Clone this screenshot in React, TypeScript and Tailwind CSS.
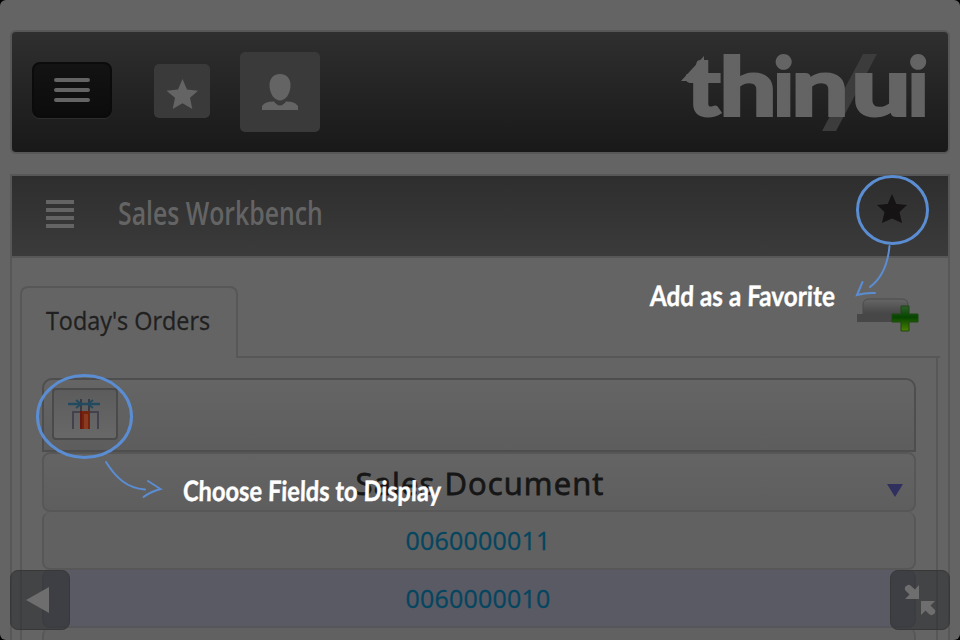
import type { ReactNode } from "react";

function MainBar() {
  return (
    <header className="flex h-[124px] shrink-0 rounded-md border-2 border-[#575757] bg-linear-to-b from-[#2f2f2f] to-[#191919] pl-5 pr-[18px]">
      <button className="mt-[30px] flex h-14 w-20 flex-col items-center justify-center gap-[6px] rounded-lg border-2 border-[#0b0b0b] bg-linear-to-b from-[#131313] to-[#0c0c0c] shadow-[0_1px_1px_#303030]">
        <span className="h-1 w-9 rounded-full bg-[#646464]" />
        <span className="h-1 w-9 rounded-full bg-[#646464]" />
        <span className="h-1 w-9 rounded-full bg-[#646464]" />
      </button>
      <button className="ml-[42px] mt-8 h-[54px] w-14 rounded-[5px] bg-[#3a3a3a]">
        <svg viewBox="0 0 56 54" className="h-[54px] w-14">
          <path d="M28.5 15 L33 25.5 L44 26.7 L36 33.8 L38.3 45 L28.5 39.3 L18.7 45 L21 33.8 L12.5 26.7 L24 25.5Z" fill="#646464" />
        </svg>
      </button>
      <button className="ml-[30px] mt-5 size-20 rounded-[5px] bg-[#3a3a3a]">
        <svg viewBox="0 0 80 80" className="size-20">
          <path d="M40 22 C46.5 22 50.5 26.5 50.5 33 C50.5 42 45.5 48.5 40 48.5 C34.5 48.5 29.5 42 29.5 33 C29.5 26.5 33.5 22 40 22Z" fill="#646464" />
          <path d="M22 58 V54 C25 50 30 49.5 34 49.5 Q37 53.5 40 53.5 Q43 53.5 46 49.5 C50 49.5 55 50 58 54 V58Z" fill="#646464" />
        </svg>
      </button>
      <svg viewBox="680 40 250 100" className="ml-auto mt-2 h-[100px] w-[250px]" fill="#646464">
        <path d="M863 54 H877 L836 131 H822Z" fill="#3c3c3c" />
        <path d="M681 81 L704 56 V81Z" />
        <g fontFamily="Lato, sans-serif" fontWeight="900" fontSize="82" stroke="#646464" strokeWidth="2">
          <text x="686" y="115.500" textLength="35" lengthAdjust="spacingAndGlyphs">t</text>
          <text x="719" y="115.500" textLength="58" lengthAdjust="spacingAndGlyphs">h</text>
          <text x="773" y="115.500">i</text>
          <text x="791" y="115.500" textLength="58" lengthAdjust="spacingAndGlyphs">n</text>
          <text x="851" y="115.500" textLength="60" lengthAdjust="spacingAndGlyphs">u</text>
          <text x="907.500" y="115.500">i</text>
        </g>
      </svg>
    </header>
  );
}

function TitleBar() {
  return (
    <div className="flex h-[82px] shrink-0 items-start border-b-2 border-[#575757] bg-linear-to-b from-[#2e2e2e] to-[#3b3b3b] pl-[34px]">
      <div className="mt-6 flex w-7 flex-col gap-1">
        <span className="h-1 bg-[#646464]" />
        <span className="h-1 bg-[#646464]" />
        <span className="h-1 bg-[#646464]" />
        <span className="h-1 bg-[#646464]" />
      </div>
      <h1 className="ml-[44px] mt-[17px] origin-left scale-x-[0.775] whitespace-nowrap font-['Open_Sans',sans-serif] text-[32px] leading-10 font-semibold text-[#646464]">
        Sales Workbench
      </h1>
      <svg viewBox="0 0 32 32" className="ml-auto mr-[40px] mt-[17px] size-8">
        <path d="M16 1 L20.3 11 L31 12 L23.5 19 L26 30 L16 25.5 L6 30 L8.5 19 L1 12 L11.7 11Z" fill="#151313" />
      </svg>
    </div>
  );
}

function TabStrip() {
  return (
    <div className="flex h-[72px]">
      <div className="h-[72px] w-[218px] rounded-t-lg border-2 border-b-0 border-[#575757] pl-6 pt-[14px]">
        <span className="inline-block origin-left scale-x-[0.935] whitespace-nowrap font-['Open_Sans',sans-serif] text-[25px] leading-9 text-[#202020] [-webkit-text-stroke:0.3px]">
          Today's Orders
        </span>
      </div>
      <div className="flex flex-1 justify-end border-b-2 border-[#575757] pr-5 pt-2">
        <svg viewBox="0 0 64 40" className="h-10 w-16">
          <defs>
            <linearGradient id="tray" x1="0" y1="0" x2="0" y2="1">
              <stop offset="0" stopColor="#666" />
              <stop offset="1" stopColor="#454545" />
            </linearGradient>
            <linearGradient id="plus" x1="0" y1="0" x2="0" y2="1">
              <stop offset="0" stopColor="#2f5e2c" />
              <stop offset="0.45" stopColor="#064500" />
              <stop offset="1" stopColor="#4c8200" />
            </linearGradient>
          </defs>
          <path d="M7 20 V11 Q7 5 13 5 H46 Q52 5 52 11 V20Z" fill="url(#tray)" stroke="#4b4b4b" />
          <path d="M1 20 H52 V28 H1Z" fill="#474747" />
          <path d="M45 12 H53 V20 H62 V28 H53 V37 H45 V28 H36 V20 H45Z" fill="url(#plus)" stroke="#1c4912" />
        </svg>
      </div>
    </div>
  );
}

function Toolbar() {
  return (
    <div className="h-[74px] rounded-t-[10px] border-2 border-[#4e4e4e] bg-linear-to-b from-[#656565] to-[#5d5d5d] pl-2 pt-2">
      <button className="flex h-[52px] w-[66px] items-center justify-center rounded-[4px] border-2 border-[#4a4a4a] bg-linear-to-b from-[#5c5c5c] to-[#686868]">
        <svg viewBox="68 398 34 34" className="h-[34px] w-[34px]" fill="none">
          <path d="M73 430 V413 H98 V430" stroke="#42414d" strokeWidth="2" />
          <path d="M81 400 V430 M89 400 V430" stroke="#383b44" strokeWidth="2" />
          <path d="M80 412 H90 V430 H80Z" fill="#73240f" />
          <path d="M81 412 V430" stroke="#681813" strokeWidth="2" />
          <path d="M84 415 H88 V430 H84Z" fill="#8a3a1e" />
          <path d="M68 405 H100" stroke="#234b60" strokeWidth="2.500" />
          <path d="M76 401 L81 405 L76 409 M93 401 L88 405 L93 409" stroke="#234b60" strokeWidth="2" />
        </svg>
      </button>
    </div>
  );
}

function Row({ children, shaded = false }: { children: ReactNode; shaded?: boolean }) {
  return (
    <div
      className={`h-[58px] rounded-lg border-x-2 border-b-2 pr-[2px] text-center font-['Open_Sans',sans-serif] text-[25px] leading-[57px] tracking-[0.2px] text-[#04455f] [-webkit-text-stroke:0.3px] ${shaded ? "border-[#55555b] bg-[#5a5a65]" : "border-[#575757] bg-[#616161]"}`}
    >
      {children}
    </div>
  );
}

function Orders() {
  return (
    <section className="flex-1 pl-2 pr-2">
      <TabStrip />
      <div className="mr-[2px] h-[300px] border-x-2 border-[#575757] px-5 pt-5">
        <Toolbar />
        <div className="flex h-[60px] rounded-lg border-2 border-[#575757] bg-linear-to-b from-[#646464] to-[#5e5e5e]">
          <span className="w-[30px]" />
          <h2 className="flex-1 text-center font-['Open_Sans',sans-serif] text-[31px] leading-[58px] font-normal tracking-[1.1px] text-[#161616] [-webkit-text-stroke:0.8px]">
            Sales Document
          </h2>
          <svg viewBox="0 0 18 16" className="mr-[10px] mt-[29px] h-4 w-[18px]">
            <path d="M1 1 H17 L9 14Z" fill="#30305f" />
          </svg>
        </div>
        <Row>0060000011</Row>
        <Row shaded>0060000010</Row>
        <Row>{""}</Row>
      </div>
    </section>
  );
}

function Annotations() {
  return (
    <div className="absolute inset-0">
      <svg viewBox="0 0 960 640" className="absolute inset-0 h-[640px] w-[960px]" fill="none" stroke="#5b8dd3" strokeLinecap="round">
        <ellipse cx="892.5" cy="210" rx="35" ry="33.5" strokeWidth="3" />
        <ellipse cx="84.5" cy="416.5" rx="47" ry="41" strokeWidth="3" />
        <path d="M889.500 246 C888 263 882 278 870 287" strokeWidth="2" />
        <path d="M862.500 282 L857 295 Q866 292.500 875 293" strokeWidth="2" />
        <path d="M106 462 C116 478 127 488 145 489.500" strokeWidth="2" />
        <path d="M148 481 L160.500 489 Q151 491.500 143.500 497" strokeWidth="2" />
      </svg>
      <p className="absolute left-[650px] top-[275px] origin-left -skew-x-2 scale-x-[0.868] whitespace-nowrap font-[Lato,sans-serif] text-[28px] leading-10 font-bold text-white [-webkit-text-stroke:0.4px]">
        Add as a Favorite
      </p>
      <p className="absolute left-[183px] top-[470px] origin-left -skew-x-2 scale-x-[0.845] whitespace-nowrap font-[Lato,sans-serif] text-[28px] leading-10 font-bold text-white [-webkit-text-stroke:0.4px]">
        Choose Fields to Display
      </p>
      <button className="absolute left-[10px] top-[570px] size-[60px] rounded-lg border border-[#383838] bg-[#28292b]/55">
        <svg viewBox="0 0 60 60" className="-ml-px -mt-px size-[60px]">
          <path d="M16 30 L39 17 V43Z" fill="#6e6e6e" />
        </svg>
      </button>
      <button className="absolute left-[890px] top-[570px] size-[60px] rounded-lg border border-[#383838] bg-[#28292b]/55">
        <svg viewBox="0 0 60 60" className="-ml-px -mt-px size-[60px]" fill="#6e6e6e">
          <path d="M29 15 V29 H15 L19.500 24.500 L15 20 Q14 17 17 15.500 Q19 14 21 16 L25 19.500Z" />
          <path d="M31 31 H45 L40.500 35.500 L45 40 Q46 43 43 44.500 Q41 46 39 44 L35.500 40.500 L31 45Z" />
        </svg>
      </button>
    </div>
  );
}

export default function App() {
  return (
    <div className="h-[640px] w-[960px] overflow-hidden bg-black">
      <main className="relative flex h-[640px] flex-col gap-5 overflow-hidden rounded-md bg-[#646464] px-[10px] pt-[30px]">
        <MainBar />
        <div className="flex h-[480px] shrink-0 flex-col border-x-2 border-t-2 border-[#575757]">
          <TitleBar />
          <div className="h-7 shrink-0" />
          <Orders />
        </div>
        <Annotations />
      </main>
    </div>
  );
}
